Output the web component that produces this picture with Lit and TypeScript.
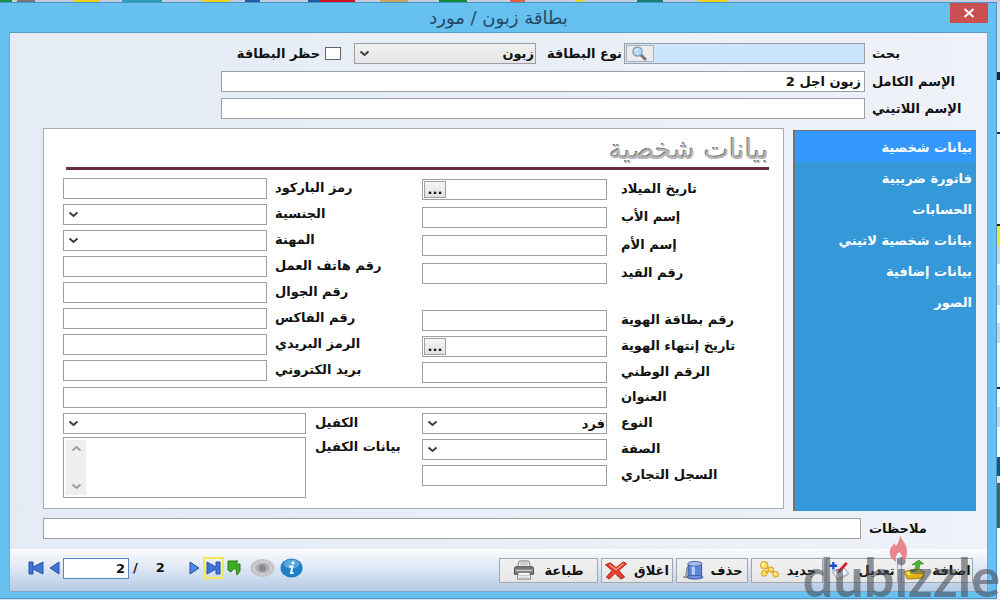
import { LitElement, html, css, svg, nothing } from "lit";
import { customElement, property, state } from "lit/decorators.js";
import { classMap } from "lit/directives/class-map.js";

type Kind = "text" | "select" | "date" | "area";
interface Field {
  id: string;
  label: string;
  kind?: Kind;
  value?: string;
}

const chevron = svg`<path d="M1.5 2.5 5.5 6 9.5 2.5" fill="none" stroke="#3c3c3c" stroke-width="2"/>`;

const birthGroup: Field[] = [
  { id: "birth", label: "تاريخ الميلاد", kind: "date" },
  { id: "father", label: "إسم الأب" },
  { id: "mother", label: "إسم الأم" },
  { id: "record", label: "رقم القيد" },
];
const identityGroup: Field[] = [
  { id: "idno", label: "رقم بطاقة الهوية" },
  { id: "idexp", label: "تاريخ إنتهاء الهوية", kind: "date" },
  { id: "national", label: "الرقم الوطني" },
];
const contactGroup: Field[] = [
  { id: "barcode", label: "رمز الباركود" },
  { id: "nationality", label: "الجنسية", kind: "select" },
  { id: "job", label: "المهنة", kind: "select" },
  { id: "workphone", label: "رقم هاتف العمل" },
  { id: "mobile", label: "رقم الجوال" },
  { id: "fax", label: "رقم الفاكس" },
  { id: "zip", label: "الرمز البريدي" },
  { id: "email", label: "بريد الكتروني" },
];
const typeGroup: Field[] = [
  { id: "type", label: "النوع", kind: "select", value: "فرد" },
  { id: "capacity", label: "الصفة", kind: "select" },
  { id: "trade", label: "السجل التجاري" },
];
const sponsorGroup: Field[] = [
  { id: "sponsor", label: "الكفيل", kind: "select" },
  { id: "sponsordata", label: "بيانات الكفيل", kind: "area" },
];

const fieldStyles = css`
  * {
    box-sizing: border-box;
  }
  input,
  select,
  textarea,
  button {
    font: inherit;
    color: inherit;
    margin: 0;
    border-radius: 0;
    outline: none;
  }
  .box {
    width: 100%;
    height: 21px;
    padding: 0 3px;
    border: 1px solid #9b9ea3;
    background: #fff;
  }
  .pick {
    display: grid;
    align-items: center;
  }
  .pick > * {
    grid-area: 1 / 1;
  }
  .pick select {
    appearance: none;
    padding: 0 1px;
  }
  .pick svg {
    justify-self: end;
    margin-left: 5px;
    pointer-events: none;
  }
`;

@customElement("form-field")
class FormField extends LitElement {
  @property({ attribute: false }) field!: Field;

  static styles = [
    fieldStyles,
    css`
      :host {
        display: grid;
        grid-template-columns: var(--label, 176px) minmax(0, 1fr);
        align-items: start;
      }
      label {
        line-height: 20px;
        padding-left: var(--label-gap, 14px);
        text-align: left;
        white-space: nowrap;
      }
      .date {
        display: flex;
        padding: 1px;
      }
      .date input {
        flex: 1;
        min-width: 0;
        border: 0;
        padding: 0 2px;
      }
      .date button {
        width: 22px;
        height: 17px;
        padding: 0;
        border: 1px solid #a0a0a0;
        background: linear-gradient(#f6f6f6, #e2e2e2);
        line-height: 14px;
      }
      .area {
        display: flex;
        height: 61px;
        padding: 2px;
      }
      .area textarea {
        flex: 1;
        min-width: 0;
        border: 0;
        padding: 0;
        resize: none;
        overflow: hidden;
      }
      .scroll {
        display: flex;
        flex-direction: column;
        justify-content: space-between;
        align-items: center;
        width: 20px;
        padding: 4px 0;
        background: #efefef;
      }
      .scroll svg {
        display: block;
        opacity: 0.45;
      }
      .up {
        transform: rotate(180deg);
      }
    `,
  ];

  private control() {
    const { id, kind, value } = this.field;
    switch (kind) {
      case "select":
        return html`<div class="pick">
          <select class="box" id=${id}>
            <option>${value ?? ""}</option>
          </select>
          <svg width="11" height="9">${chevron}</svg>
        </div>`;
      case "date":
        return html`<div class="box date">
          <input id=${id} type="text" />
          <button type="button" aria-label=${this.field.label}>...</button>
        </div>`;
      case "area":
        return html`<div class="box area">
          <textarea id=${id}></textarea>
          <div class="scroll">
            <svg class="up" width="11" height="9">${chevron}</svg>
            <svg width="11" height="9">${chevron}</svg>
          </div>
        </div>`;
      default:
        return html`<input class="box" id=${id} type="text" />`;
    }
  }

  render() {
    return html`<label for=${this.field.id}>${this.field.label}</label>${this.control()}`;
  }
}

const icons = {
  add: svg`<path d="M1 12 16 9 22 13 20 19 4 20Z" fill="#e0b312" stroke="#a37c08"/><path d="M2 13 16 10.500 20 13 5 16Z" fill="#ffe45a"/><path d="M7 12C12 12 13 8 13 5L9 5 16 0 21 4 17 4.500C17 10 13 13 7 12Z" fill="#4fb52c" stroke="#2c7d17" stroke-width=".7"/>`,
  edit: svg`<path d="M3 12 15 8 20 14 8 20Z" fill="#fbfbfd" stroke="#8e93a4"/><path d="M8 20 20 14 20 16 9 22Z" fill="#b9bdca"/><path d="M4 2V10M0 6H8" stroke="#1f4fd0" stroke-width="2.500"/><path d="M10 12 18 3" stroke="#d3202a" stroke-width="3"/><path d="M8 14 10.500 11 12 12.500Z" fill="#333"/>`,
  fresh: svg`<path d="M6 6 13 10 6 14M13 10 18 15" stroke="#e9ae24" stroke-width="2.500" fill="none"/><g fill="#ffdc5c" stroke="#d39a1c"><circle cx="6" cy="5.500" r="4"/><circle cx="6" cy="14" r="3"/><circle cx="13" cy="10" r="2.800"/><circle cx="18" cy="15" r="3"/></g><circle cx="5" cy="4.500" r="1.800" fill="#fff6c4"/><circle cx="17.500" cy="14.500" r="1.200" fill="#fff6c4"/>`,
  remove: svg`<path d="M1 18C6 18 2 6 8 5L8 18Z" fill="#bcbfc4" stroke="#777"/><path d="M6 4H20V18H6Z" fill="#5f86d8" stroke="#3a559c"/><path d="M9.500 5H13V18H10Z" fill="#b9ceff"/><ellipse cx="13" cy="4" rx="7.500" ry="2.500" fill="#a9bdea" stroke="#4862a5"/><ellipse cx="13" cy="18" rx="8.500" ry="2" fill="#6e8fd8" stroke="#3a559c"/>`,
  close: svg`<path d="M0 5 5 3 11 8 19 2 22 4 14 11 20 18 16 20 10 14 4 20 1 18 7 11Z" fill="#e8412f" stroke="#a81c12"/><path d="M4 5 11 10 19 4" fill="none" stroke="#ff9a86" stroke-width="1.300"/>`,
  print: svg`<path d="M6 1H16L18 8H4Z" fill="#f7f7f7" stroke="#777"/><path d="M7 3H15M7 5H15" stroke="#aaa"/><path d="M1 9Q1 7 3 7H19Q21 7 21 9V15H1Z" fill="#77797d" stroke="#4c4e52"/><path d="M2 11H20" stroke="#c6c8cc" stroke-width="1.500"/><path d="M5 13H17L18 20H4Z" fill="#fff" stroke="#777"/><path d="M6 16H16M6 18H16" stroke="#bbb"/>`,
};

const actions: { key: keyof typeof icons; text: string; wide?: boolean }[] = [
  { key: "add", text: "اضافة" },
  { key: "edit", text: "تعديل" },
  { key: "fresh", text: "جديد" },
  { key: "remove", text: "حذف" },
  { key: "close", text: "اغلاق" },
  { key: "print", text: "طباعة", wide: true },
];

const sections = ["بيانات شخصية", "فاتورة ضريبية", "الحسابات", "بيانات شخصية لاتيني", "بيانات إضافية", "الصور"];

@customElement("app-root")
class AppRoot extends LitElement {
  @state() private active = 0;

  static styles = [
    fieldStyles,
    css`
      :host {
        display: block;
        direction: rtl;
        font: bold 13px/16px "DejaVu Sans", "Noto Sans", sans-serif;
        color: #111;
      }
      .desktop {
        position: relative;
        min-height: 100vh;
        display: grid;
        grid-template-columns: 3px minmax(0, 1fr);
        grid-template-rows: 2px 1fr;
        padding-bottom: 1px;
        overflow: hidden;
        background: #dfe6ee;
      }
      .topstrip {
        grid-column: 1 / -1;
        background: linear-gradient(
          to right,
          #1b8f4a 0 12px, #c8cdd6 12px 17px, #777 17px 35px, #c3cde0 35px 73px, #ecd21c 73px 100px,
          #c3cde0 100px 122px, #2c9ab8 122px 162px, #c3cde0 162px 202px, #ecd21c 202px 230px,
          #c3cde0 230px 245px, #2259a8 245px 260px, #c3cde0 260px 308px, #1e5ca0 308px 320px,
          #cf1020 320px 355px, #c3cde0 355px 380px, #c9a55c 380px 408px, #c3cde0 408px 439px,
          #128a3c 439px 467px, #c3cde0 467px 510px, #e8603a 510px 525px, #c3cde0 525px 575px,
          #d7dc20 575px 583px, #c3cde0 583px 637px, #158070 637px 663px, #c3cde0 663px 698px,
          #ecd21c 698px 727px, #c3cde0 727px
        );
      }
      .sidestrip {
        background: linear-gradient(
          #d5dbe6 0 70px, #222 70px 78px, #f4f4f6 78px 130px, #333 130px 132px, #f4f4f6 132px 222px,
          #222 222px 224px, #f0ee18 224px 243px, #d9d3dd 243px 262px, #f6f7fa 262px 283px, #d9d3dd 283px 303px,
          #f6f7fa 303px 321px, #d9d3dd 321px 341px, #f6f7fa 341px 385px, #222 385px 387px, #f6f7fa 387px 405px,
          #d9d3dd 405px 425px, #f6f7fa 425px 455px, #0c5a8c 455px 474px, #dfe6ee 474px 481px,
          #346a72 481px 526px, #f6f7fa 526px
        );
      }
      .window {
        display: flex;
        flex-direction: column;
        padding: 0 8px 6px 9px;
        border: 1px solid #4a95c6;
        border-left: 0;
        background: #66c0f0;
      }
      .titlebar {
        display: grid;
        grid-template-columns: 38px 1fr 38px;
        align-items: start;
        height: 29px;
      }
      .titlebar h1 {
        margin: 0;
        font: 18px/30px "DejaVu Sans", sans-serif;
        text-align: center;
        color: #234a63;
      }
      .x {
        height: 20px;
        padding: 0;
        border: 0;
        background: #c94f50;
        display: grid;
        place-items: center;
      }
      .client {
        flex: 1;
        display: flex;
        flex-direction: column;
        border: 1px solid #7fa6c2;
        border-top-color: #5b9ac2;
        background: linear-gradient(to left, #eff2f8, #e4ebf5);
      }
      .head {
        display: grid;
        grid-template-columns: 115px minmax(0, 1fr);
        row-gap: 6px;
        column-gap: 7px;
        padding: 10px 0 0 211px;
        align-items: center;
      }
      .head .lab {
        text-align: left;
        white-space: nowrap;
      }
      .first {
        display: flex;
        align-items: center;
        margin-bottom: 1px;
        white-space: nowrap;
      }
      .search {
        display: flex;
        flex: 0 0 241px;
        padding: 1px;
        background: #cce5ff;
      }
      .search input {
        flex: 1;
        min-width: 0;
        border: 0;
        background: none;
      }
      .search button {
        width: 28px;
        padding: 0;
        border: 1px solid #aeb2b8;
        background: #ececec;
        display: grid;
        place-items: center;
      }
      .kindlab {
        width: 88px;
        padding-right: 2px;
      }
      .kind {
        flex: 0 0 182px;
      }
      .kind select {
        background: linear-gradient(#f1f1f1, #e5e5e5);
      }
      .ban {
        display: flex;
        align-items: center;
        gap: 5px;
        margin-right: 13px;
      }
      .ban input {
        appearance: none;
        width: 16px;
        height: 13px;
        border: 1px solid #666;
        background: #fff;
      }
      .main {
        flex: 1;
        display: flex;
        align-items: stretch;
        gap: 9px;
        padding: 9px 11px 0 33px;
      }
      nav {
        flex: 0 0 183px;
        display: flex;
        flex-direction: column;
        margin-top: 2px;
        border-left: 2px solid #6e7378;
        border-top: 1px solid #6e7378;
        background: #3598d8;
      }
      nav a {
        padding: 0 4px;
        line-height: 34px;
        height: 31px;
        color: #fff;
        text-decoration: none;
      }
      nav a.on {
        background: #3399ff;
      }
      .card {
        flex: 1;
        min-width: 0;
        margin-bottom: 2px;
        border: 1px solid #a9adb3;
        background: #fff;
      }
      .card h2 {
        margin: 0 14px 0 22px;
        height: 41px;
        border-bottom: 3px solid #6b2c48;
        font: 27px/42px "DejaVu Sans", sans-serif;
        color: #b4b6b8;
        text-shadow: -1px -1px 0 #777;
      }
      .cols {
        display: flex;
        justify-content: space-between;
        padding-left: 19px;
      }
      .right {
        width: 361px;
      }
      .left {
        --label: 140px;
        --label-gap: 8px;
        width: 344px;
      }
      .wideleft {
        --label: 100px;
        --label-gap: 9px;
        width: 343px;
      }
      .group {
        display: flex;
        flex-direction: column;
        gap: 5px;
      }
      .loose {
        gap: 7px;
        margin-bottom: 26px;
      }
      .top .right {
        padding-top: 9px;
      }
      .top .left {
        padding-top: 8px;
      }
      .address {
        margin: 4px 0 5px 19px;
      }
      .wideleft .group {
        gap: 3px;
      }
      .notes {
        display: grid;
        grid-template-columns: 118px minmax(0, 1fr);
        column-gap: 8px;
        align-items: center;
        padding: 7px 0 10px 33px;
      }
      .notes label {
        text-align: left;
      }
      .footer {
        display: flex;
        justify-content: space-between;
        align-items: flex-start;
        height: 42px;
        padding: 9px 14px 0 18px;
        background: linear-gradient(#fbfcfe, #dbe5f3 50%, #b4cae4);
      }
      .actions {
        display: flex;
        gap: 3px;
      }
      .act {
        display: flex;
        align-items: center;
        justify-content: center;
        gap: 7px;
        width: 72px;
        height: 25px;
        padding: 0;
        border: 1px solid #a3a6ac;
        background: linear-gradient(#f1f1f1, #e6e6e6);
        white-space: nowrap;
      }
      .act.wide {
        width: 99px;
        gap: 9px;
      }
      .pager {
        display: flex;
        direction: ltr;
        align-items: center;
        height: 20px;
      }
      .pager button {
        padding: 0;
        border: 0;
        background: none;
        display: grid;
        place-items: center;
        height: 20px;
      }
      .pager .box {
        width: 66px;
        margin: 0 4px 0 3px;
        border-color: #4f8cc9;
        text-align: right;
      }
      .pager .total {
        width: 55px;
        display: flex;
        gap: 18px;
      }
      .pager .last {
        width: 21px;
        height: 22px;
        margin: 0 3px;
        border: 2px solid #f3ea52;
      }
      .pager .eye {
        margin: 0 5px 0 8px;
      }
      .mark {
        position: absolute;
        right: 0;
        bottom: 0;
        direction: ltr;
        font: bold 54px/46px Lato, sans-serif;
        color: rgba(70, 76, 86, 0.58);
        pointer-events: none;
      }
      .flame {
        position: absolute;
        right: 91px;
        bottom: 36px;
        pointer-events: none;
      }
    `,
  ];

  private group(fields: Field[], loose = false) {
    return html`<div class=${classMap({ group: true, loose })}>
      ${fields.map((f) => html`<form-field .field=${f}></form-field>`)}
    </div>`;
  }

  private header() {
    return html`<div class="head">
      <label class="lab" for="search">بحث</label>
      <div class="first">
        <div class="box search">
          <input id="search" type="text" />
          <button type="button" aria-label="بحث">
            <svg width="18" height="16" viewBox="0 0 18 16">
              <path d="M9 8 15 14" stroke="#777" stroke-width="3" />
              <circle cx="6.500" cy="5.500" r="4.500" fill="#b9dcf5" stroke="#7ba3c4" stroke-width="1.500" />
              <path d="M4 5Q5 3 7 3" stroke="#fff" fill="none" />
            </svg>
          </button>
        </div>
        <label class="kindlab" for="kind">نوع البطاقة</label>
        <div class="pick kind">
          <select class="box" id="kind"><option>زبون</option></select>
          <svg width="11" height="9">${chevron}</svg>
        </div>
        <div class="ban">
          <input id="ban" type="checkbox" />
          <label for="ban">حظر البطاقة</label>
        </div>
      </div>
      <label class="lab" for="full">الإسم الكامل</label>
      <input class="box" id="full" type="text" value="زبون اجل 2" />
      <label class="lab" for="latin">الإسم اللاتيني</label>
      <input class="box" id="latin" type="text" />
    </div>`;
  }

  private pager() {
    return html`<div class="pager">
      <button type="button" aria-label="الأول">
        <svg width="17" height="14"><path d="M1 1H5V6L15 1V13L5 8V13H1Z" fill="#3f74d8" stroke="#2a4fa6" /></svg>
      </button>
      <button type="button" aria-label="السابق">
        <svg width="15" height="14"><path d="M14 1V13L5 7Z" fill="#3f74d8" stroke="#2a4fa6" /></svg>
      </button>
      <input class="box" aria-label="السجل" value="2" />
      <span class="total"><span>/</span><span>2</span></span>
      <button type="button" aria-label="التالي">
        <svg width="12" height="14"><path d="M2 1V13L11 7Z" fill="#4a86ec" stroke="#2a4fa6" /></svg>
      </button>
      <button class="last" type="button" aria-label="الأخير">
        <svg width="15" height="14"><path d="M14 1H10V6L1 1V13L10 8V13H14Z" fill="#3f74d8" stroke="#2a4fa6" /></svg>
      </button>
      <button type="button" aria-label="رجوع">
        <svg width="15" height="16">
          <path d="M1 1H11L8.500 4H13V11L10 15 9 9 7 8.500 4 12 1 10Z" fill="#3fae24" stroke="#277a14" />
        </svg>
      </button>
      <button class="eye" type="button" aria-label="عرض">
        <svg width="25" height="20">
          <ellipse cx="12.500" cy="10" rx="12" ry="9" fill="#c3c5c8" />
          <ellipse cx="12.500" cy="10" rx="8" ry="6" fill="#adafb2" stroke="#dcdddf" />
          <circle cx="12.500" cy="10" r="3.500" fill="#86888c" />
        </svg>
      </button>
      <button type="button" aria-label="معلومات">
        <svg width="23" height="20">
          <ellipse cx="11.500" cy="10" rx="11" ry="9.500" fill="#1f7fc4" />
          <ellipse cx="11.500" cy="6" rx="8" ry="4.500" fill="#6db8e8" opacity=".7" />
          <circle cx="13" cy="4.800" r="1.600" fill="#fff" />
          <path d="M9 8.500H12.500L11 15H13.500" stroke="#fff" stroke-width="2" fill="none" />
        </svg>
      </button>
    </div>`;
  }

  render() {
    return html`<div class="desktop">
      <div class="topstrip"></div>
      <div class="sidestrip"></div>
      <div class="window">
        <header class="titlebar">
          <button class="x" type="button" aria-label="إغلاق">
            <svg width="12" height="10"><path d="M1.500 1 10.500 9M10.500 1 1.500 9" stroke="#fff" stroke-width="2" /></svg>
          </button>
          <h1>بطاقة زبون / مورد</h1>
        </header>
        <div class="client">
          ${this.header()}
          <div class="main">
            <nav>
              ${sections.map(
                (name, i) => html`<a
                  href="#"
                  class=${i === this.active ? "on" : nothing}
                  @click=${(e: Event) => {
                    e.preventDefault();
                    this.active = i;
                  }}
                  >${name}</a
                >`
              )}
            </nav>
            <section class="card">
              <h2>بيانات شخصية</h2>
              <div class="cols top">
                <div class="right">${this.group(birthGroup, true)}${this.group(identityGroup)}</div>
                <div class="left">${this.group(contactGroup)}</div>
              </div>
              <form-field class="address" .field=${{ id: "address", label: "العنوان" }}></form-field>
              <div class="cols">
                <div class="right">${this.group(typeGroup)}</div>
                <div class="wideleft">${this.group(sponsorGroup)}</div>
              </div>
            </section>
          </div>
          <div class="notes">
            <label for="notes">ملاحظات</label>
            <input class="box" id="notes" type="text" />
          </div>
          <footer class="footer">
            <div class="actions">
              ${actions.map(
                (a) => html`<button type="button" class=${classMap({ act: true, wide: !!a.wide })}>
                  <span>${a.text}</span>
                  <svg width="22" height="21" viewBox="0 0 22 22">${icons[a.key]}</svg>
                </button>`
              )}
            </div>
            ${this.pager()}
          </footer>
        </div>
      </div>
      <div class="mark">dubizzle</div>
      <svg class="flame" width="20" height="29" viewBox="0 0 20 29">
        <path d="M11 0C13 6 19 10 18 18C18 23 15 25 13 27C14 21 12 19 10 17C7 20 6 23 7 27C2 24 0 20 1 15C2 11 4 12 5 8L7 11C9 8 11 5 11 0Z" fill="#e8737a" opacity=".85" />
      </svg>
    </div>`;
  }
}
